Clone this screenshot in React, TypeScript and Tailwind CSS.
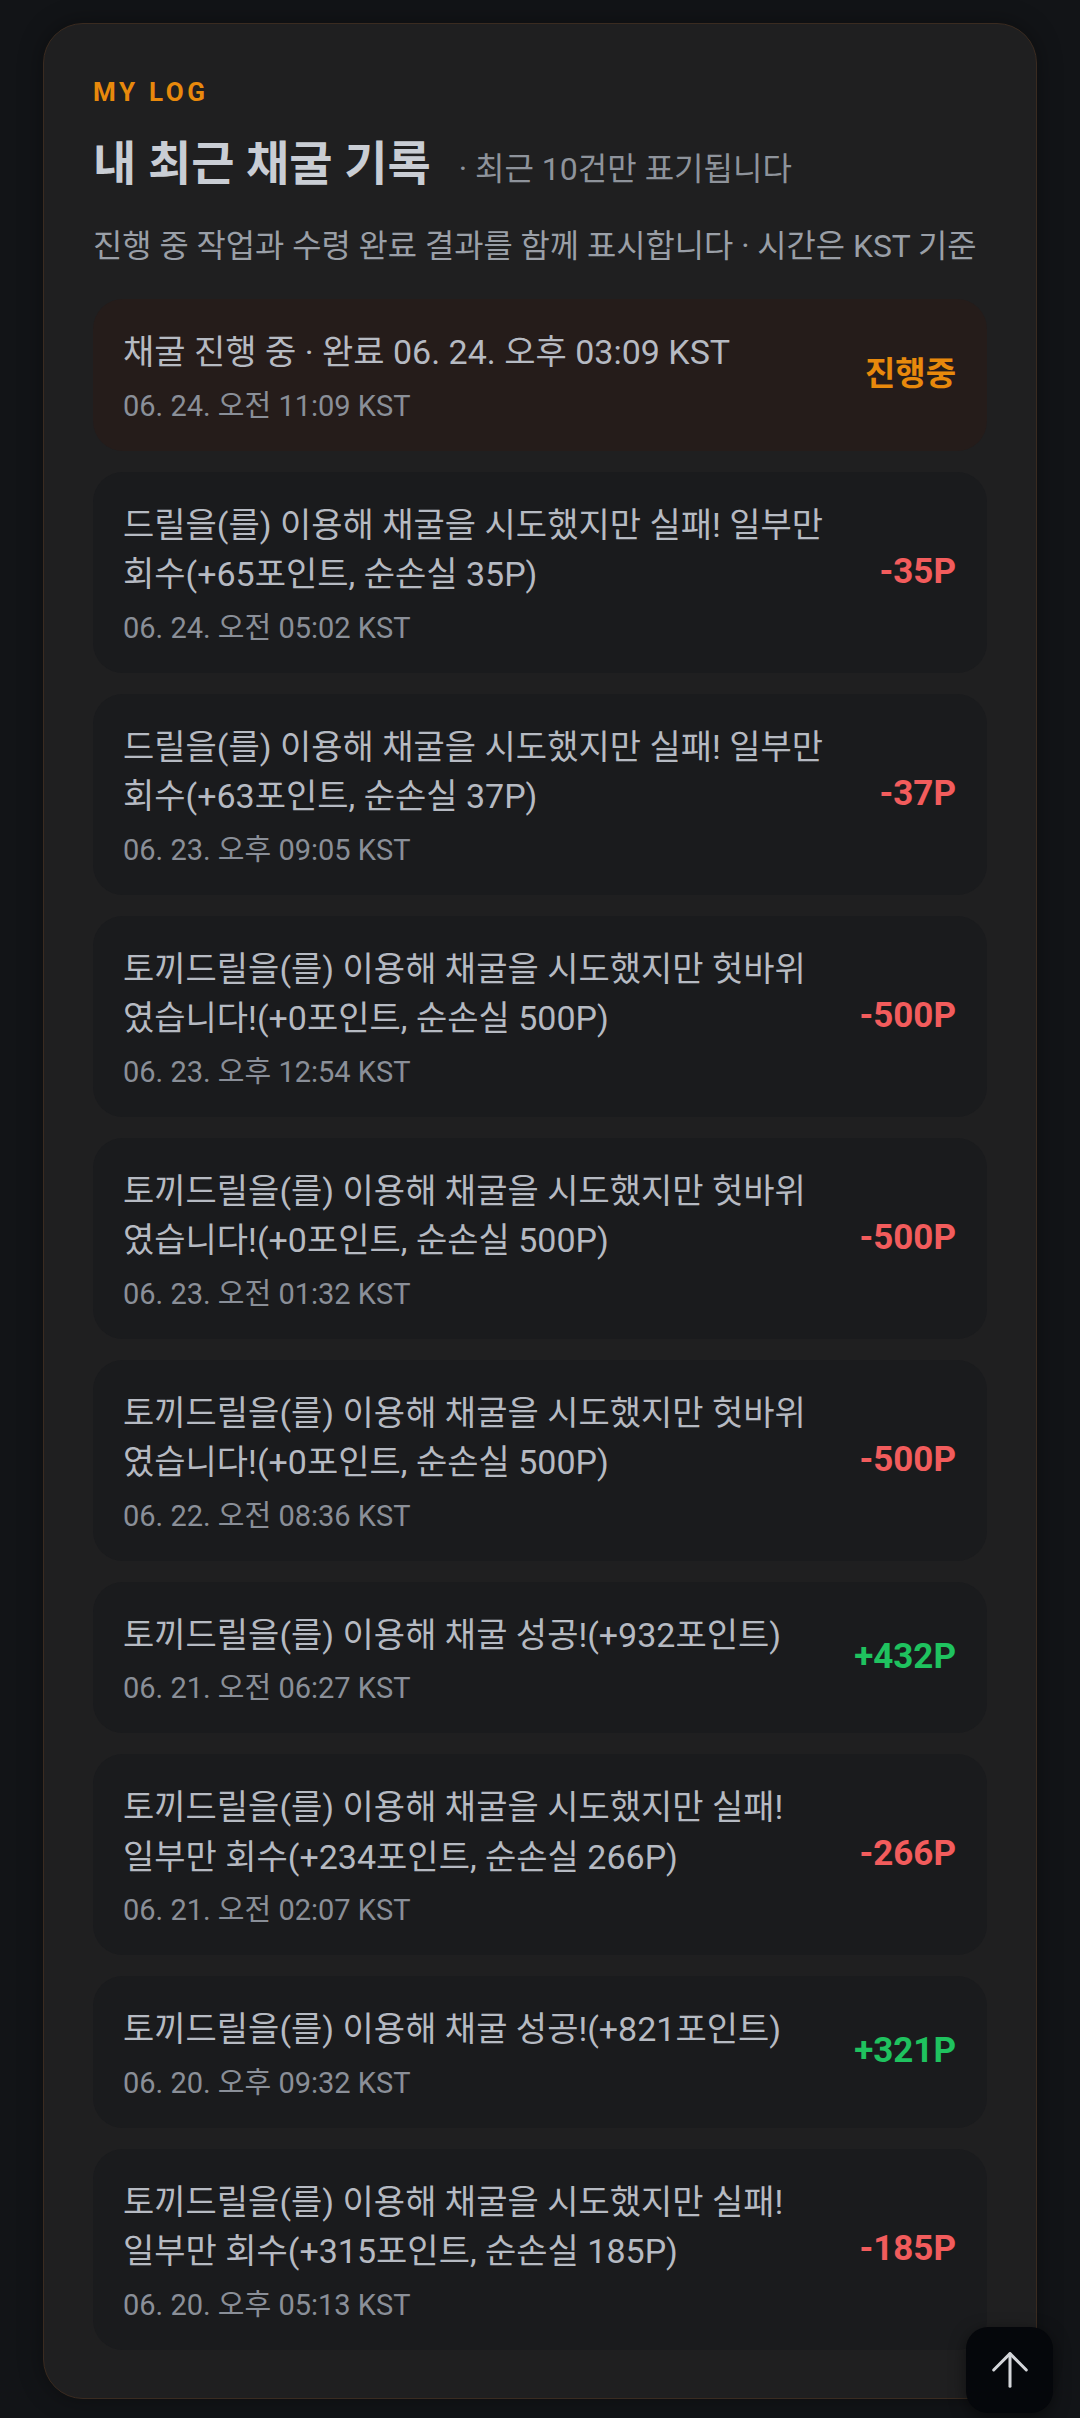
import React from "react";
import { ArrowUp } from "lucide-react";

type Kind = "pending" | "loss" | "gain";

interface Item {
  text: string;
  date: string;
  amount: string;
  kind: Kind;
}

const FAIL_DRILL = "드릴을(를) 이용해 채굴을 시도했지만 실패! 일부만 회수";
const ROCK = "토끼드릴을(를) 이용해 채굴을 시도했지만 헛바위였습니다!(+0포인트, 순손실 500P)";

const items: Item[] = [
  { text: "채굴 진행 중 · 완료 06. 24. 오후 03:09 KST", date: "06. 24. 오전 11:09 KST", amount: "진행중", kind: "pending" },
  { text: `${FAIL_DRILL}(+65포인트, 순손실 35P)`, date: "06. 24. 오전 05:02 KST", amount: "-35P", kind: "loss" },
  { text: `${FAIL_DRILL}(+63포인트, 순손실 37P)`, date: "06. 23. 오후 09:05 KST", amount: "-37P", kind: "loss" },
  { text: ROCK, date: "06. 23. 오후 12:54 KST", amount: "-500P", kind: "loss" },
  { text: ROCK, date: "06. 23. 오전 01:32 KST", amount: "-500P", kind: "loss" },
  { text: ROCK, date: "06. 22. 오전 08:36 KST", amount: "-500P", kind: "loss" },
  { text: "토끼드릴을(를) 이용해 채굴 성공!(+932포인트)", date: "06. 21. 오전 06:27 KST", amount: "+432P", kind: "gain" },
  { text: "토끼드릴을(를) 이용해 채굴을 시도했지만 실패! 일부만 회수(+234포인트, 순손실 266P)", date: "06. 21. 오전 02:07 KST", amount: "-266P", kind: "loss" },
  { text: "토끼드릴을(를) 이용해 채굴 성공!(+821포인트)", date: "06. 20. 오후 09:32 KST", amount: "+321P", kind: "gain" },
  { text: "토끼드릴을(를) 이용해 채굴을 시도했지만 실패! 일부만 회수(+315포인트, 순손실 185P)", date: "06. 20. 오후 05:13 KST", amount: "-185P", kind: "loss" },
];

function LogRow({ item }: { item: Item }) {
  const bg = item.kind === "pending" ? "bg-[#251c1a]" : "bg-[#1a1b1d]";
  const amountCls =
    item.kind === "pending"
      ? "text-[33px] text-[#e8890c]"
      : item.kind === "gain"
      ? "text-[35px] text-[#1fc25f]"
      : "text-[35px] text-[#f25c5c]";
  return (
    <li className={`flex items-center gap-[40px] rounded-[30px] ${bg} pl-[30px] pr-[31px] pt-[29px] pb-[24px]`}>
      <div className="min-w-0 flex-1">
        <p className="text-[34px] leading-[49.5px] text-[#b6bac2]">{item.text}</p>
        <p className="mt-[7px] text-[29px] leading-[42px] text-[#8a8f98]">{item.date}</p>
      </div>
      <span className="shrink-0 font-bold leading-[50px]">
        <span className={amountCls}>{item.amount}</span>
      </span>
    </li>
  );
}

export default function App() {
  return (
    <div
      className="min-h-screen bg-[#121417] px-[43px] pt-[23px] pb-[19px]"
      style={{ fontFamily: 'Roboto, "Noto Sans CJK KR", sans-serif' }}
    >
      <section className="rounded-[40px] border border-[#3a2b20] bg-[#1f1f20] px-[49px] pt-[50px] pb-[48px] shadow-[0_0_24px_rgba(0,0,0,0.35)]">
        <p className="text-[26px] font-bold leading-[36px] tracking-[0.14em] text-[#e8890c]">MY LOG</p>
        <div className="mt-[25px] flex items-baseline">
          <h2 className="text-[47px] font-bold leading-[57px] text-[#c9cdd4]">내 최근 채굴 기록</h2>
          <span className="ml-[28px] text-[32px] text-[#8e939b]">· 최근 10건만 표기됩니다</span>
        </div>
        <p className="mt-[31px] whitespace-nowrap text-[31.8px] leading-[45px] text-[#9a9fa7]">
          진행 중 작업과 수령 완료 결과를 함께 표시합니다 · 시간은 KST 기준
        </p>
        <ul className="mt-[30px] flex flex-col gap-[21px]">
          {items.map((item, i) => (
            <LogRow key={i} item={item} />
          ))}
        </ul>
      </section>
      <button
        type="button"
        aria-label="맨 위로"
        className="fixed bottom-[5px] right-[27px] flex h-[86px] w-[87px] items-center justify-center rounded-[22px] bg-[#05070b] text-[#d4d6da] shadow-[0_4px_16px_rgba(0,0,0,0.5)]"
      >
        <ArrowUp size={56} strokeWidth={1.3} />
      </button>
    </div>
  );
}
